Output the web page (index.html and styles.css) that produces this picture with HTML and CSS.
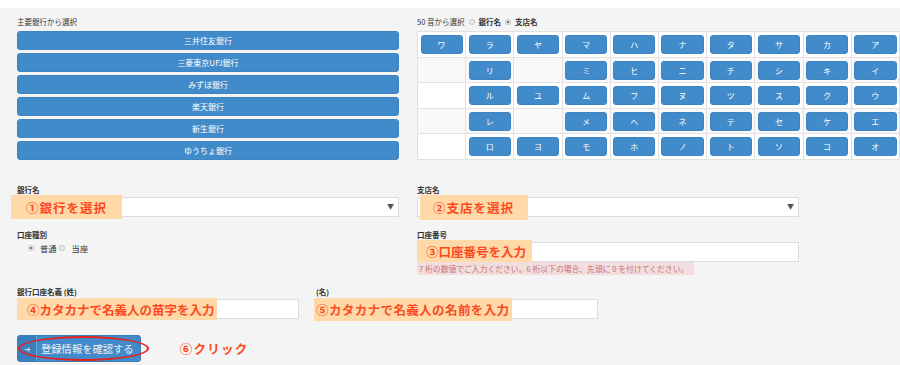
FILE: index.html
```html
<!DOCTYPE html>
<html lang="ja">
<head>
  <meta charset="UTF-8" />
  <meta name="viewport" content="width=device-width, initial-scale=1.0"/>
  <title>振込先口座の登録</title>
  <link rel="stylesheet" href="styles.css">
</head>
<body>
  <div class="topbar"></div>

  <div class="page">
    <!-- 銀行・支店の選択 -->
    <div class="select-row">
      <div class="col-left">
        <div class="caption">主要銀行から選択</div>
        <button class="bank-btn">三井住友銀行</button>
        <button class="bank-btn">三菱東京UFJ銀行</button>
        <button class="bank-btn">みずほ銀行</button>
        <button class="bank-btn">楽天銀行</button>
        <button class="bank-btn">新生銀行</button>
        <button class="bank-btn">ゆうちょ銀行</button>
      </div>

      <div class="col-right">
        <div class="caption">
          50 音から選択
          <span class="radio gap-l"></span>
          <b class="gap-l">銀行名</b>
          <span class="radio checked gap-l"></span>
          <b class="gap-l">支店名</b>
        </div>
        <table class="kana-table">
          <thead>
            <tr>
              <td><button class="kana-btn">ワ</button></td>
              <td><button class="kana-btn">ラ</button></td>
              <td><button class="kana-btn">ヤ</button></td>
              <td><button class="kana-btn">マ</button></td>
              <td><button class="kana-btn">ハ</button></td>
              <td><button class="kana-btn">ナ</button></td>
              <td><button class="kana-btn">タ</button></td>
              <td><button class="kana-btn">サ</button></td>
              <td><button class="kana-btn">カ</button></td>
              <td><button class="kana-btn">ア</button></td>
            </tr>
          </thead>
          <tbody>
            <tr>
              <td></td>
              <td><button class="kana-btn">リ</button></td>
              <td></td>
              <td><button class="kana-btn">ミ</button></td>
              <td><button class="kana-btn">ヒ</button></td>
              <td><button class="kana-btn">ニ</button></td>
              <td><button class="kana-btn">チ</button></td>
              <td><button class="kana-btn">シ</button></td>
              <td><button class="kana-btn">キ</button></td>
              <td><button class="kana-btn">イ</button></td>
            </tr>
            <tr>
              <td></td>
              <td><button class="kana-btn">ル</button></td>
              <td><button class="kana-btn">ユ</button></td>
              <td><button class="kana-btn">ム</button></td>
              <td><button class="kana-btn">フ</button></td>
              <td><button class="kana-btn">ヌ</button></td>
              <td><button class="kana-btn">ツ</button></td>
              <td><button class="kana-btn">ス</button></td>
              <td><button class="kana-btn">ク</button></td>
              <td><button class="kana-btn">ウ</button></td>
            </tr>
            <tr>
              <td></td>
              <td><button class="kana-btn">レ</button></td>
              <td></td>
              <td><button class="kana-btn">メ</button></td>
              <td><button class="kana-btn">ヘ</button></td>
              <td><button class="kana-btn">ネ</button></td>
              <td><button class="kana-btn">テ</button></td>
              <td><button class="kana-btn">セ</button></td>
              <td><button class="kana-btn">ケ</button></td>
              <td><button class="kana-btn">エ</button></td>
            </tr>
            <tr>
              <td></td>
              <td><button class="kana-btn">ロ</button></td>
              <td><button class="kana-btn">ヨ</button></td>
              <td><button class="kana-btn">モ</button></td>
              <td><button class="kana-btn">ホ</button></td>
              <td><button class="kana-btn">ノ</button></td>
              <td><button class="kana-btn">ト</button></td>
              <td><button class="kana-btn">ソ</button></td>
              <td><button class="kana-btn">コ</button></td>
              <td><button class="kana-btn">オ</button></td>
            </tr>
          </tbody>
        </table>
      </div>
    </div>

    <!-- 銀行名 / 支店名 -->
    <div class="form-row first">
      <div class="form-group">
        <div class="form-label">銀行名</div>
        <div class="field">
          <div class="select-box"></div>
          <div class="note note-bank">①銀行を選択</div>
        </div>
      </div>
      <div class="form-group">
        <div class="form-label">支店名</div>
        <div class="field">
          <div class="select-box"></div>
          <div class="note note-branch">②支店を選択</div>
        </div>
      </div>
    </div>

    <!-- 口座種別 / 口座番号 -->
    <div class="form-row">
      <div class="form-group">
        <div class="form-label">口座種別</div>
        <div class="radio-line">
          <span class="radio checked"></span>
          <span class="opt">普通</span>
          <span class="radio"></span>
          <span class="opt opt-2">当座</span>
        </div>
      </div>
      <div class="form-group">
        <div class="form-label">口座番号</div>
        <div class="field">
          <input class="text-input" type="text">
          <div class="note note-number">③口座番号を入力</div>
        </div>
        <div class="help">7 桁の数値でご入力ください。6 桁以下の場合、先頭に 0 を付けてください。</div>
      </div>
    </div>

    <!-- 名義 -->
    <div class="name-row">
      <div class="name-group">
        <div class="form-label">銀行口座名義 (姓)</div>
        <div class="field">
          <input class="text-input" type="text">
          <div class="note note-last">④カタカナで名義人の苗字を入力</div>
        </div>
      </div>
      <div class="name-group">
        <div class="form-label">(名)</div>
        <div class="field">
          <input class="text-input" type="text">
          <div class="note note-first">⑤カタカナで名義人の名前を入力</div>
        </div>
      </div>
    </div>

    <div class="submit-row">
      <button class="submit-btn">
        <span class="submit-icon">➜</span>
        <span class="submit-text">登録情報を確認する</span>
      </button>
      <div class="circle"></div>
      <span class="click-note">⑥クリック</span>
    </div>
  </div>
</body>
</html>
```

FILE: styles.css
```css
body {
  margin: 0;
  width: 900px;
  height: 365px;
  overflow: hidden;
  background-color: #f4f4f4;
  color: #333;
  font-family: "Noto Sans CJK JP", "Noto Sans", sans-serif;
}

.topbar {
  height: 8px;
  background-color: #fff;
}

.page {
  padding: 8px 0 0 17px;
}

.select-row {
  display: flex;
  gap: 18px;
}

.col-left {
  width: 382px;
}

.col-right {
  width: 483px;
}

.caption {
  display: flex;
  align-items: center;
  height: 12px;
  margin-bottom: 3px;
  font-size: 7.5px;
  line-height: 12px;
  white-space: nowrap;
}

.caption b {
  font-weight: bold;
}

.gap-l {
  margin-left: 4px;
}

.bank-btn, .kana-btn {
  display: block;
  width: 100%;
  height: 19px;
  padding: 0;
  border: 1px solid #3d84c3;
  border-radius: 3px;
  background-color: #428bca;
  color: #fff;
  font-family: "Noto Sans CJK JP", sans-serif;
  font-size: 8px;
  line-height: 17px;
}

.bank-btn {
  margin-bottom: 3px;
}

.kana-table {
  width: 483px;
  margin-top: 1px;
  border-collapse: collapse;
  table-layout: fixed;
  background-color: #fff;
}

.kana-table td {
  border: 1px solid #e1e1e1;
  padding: 3px 2.5px 2.5px;
}

.kana-table tbody tr:nth-child(odd) td {
  background-color: #f9f9f9;
}

.radio {
  display: inline-block;
  width: 6px;
  height: 6px;
  border: 1px solid #c4c4c4;
  border-radius: 50%;
  background-color: #ececec;
  box-sizing: border-box;
}

.radio.checked {
  background: radial-gradient(circle, #777 0 1.3px, #ececec 1.6px);
}

/* フォーム */
.form-row {
  display: flex;
  gap: 18px;
  margin-top: 12px;
}

.form-row.first {
  margin-top: 21px;
}

.form-group {
  width: 382px;
}

.form-label {
  font-size: 7.5px;
  font-weight: bold;
  line-height: 11px;
  margin-bottom: 2px;
  white-space: nowrap;
}

.field {
  position: relative;
}

.select-box {
  height: 20px;
  background-color: #fff;
  border: 1px solid #dcdcdc;
  box-sizing: border-box;
}

.select-box::after {
  content: "▼";
  position: absolute;
  right: 5px;
  top: 5px;
  font-size: 7px;
  line-height: 9px;
  color: #555;
}

.text-input {
  display: block;
  width: 100%;
  height: 20px;
  margin: 0;
  border: 1px solid #dcdcdc;
  background-color: #fff;
  box-sizing: border-box;
}

.radio-line {
  display: flex;
  align-items: center;
  height: 12px;
  padding-left: 11px;
  font-size: 8.3px;
}

.opt {
  margin: 0 2px 0 6px;
}

.opt-2 {
  margin-left: 7px;
}

.help {
  width: max-content;
  padding: 0 6px 0 2px;
  background-color: #f2dede;
  color: #c96f76;
  font-size: 7.8px;
  line-height: 13px;
  white-space: nowrap;
}

.name-row {
  display: flex;
  gap: 17px;
  margin-top: 11px;
}

.name-group {
  width: 282px;
}

/* 注釈 */
.note {
  position: absolute;
  display: flex;
  align-items: center;
  box-sizing: border-box;
  background-color: #ffd9a8;
  color: #fa4b1e;
  font-size: 12.5px;
  font-weight: bold;
  letter-spacing: 0.4px;
  white-space: nowrap;
}

.note-bank { left: -6px; top: -2px; width: 111px; height: 24px; padding-left: 15px; letter-spacing: 1px; }
.note-branch { left: 3px; top: -2px; width: 108px; height: 25px; padding-left: 13px; letter-spacing: 1px; }
.note-number { left: 0; top: -2px; width: 115px; height: 22px; padding-left: 9px; letter-spacing: 0; }
.note-last { left: 0; top: -1px; width: 200px; height: 22px; padding-left: 10px; letter-spacing: 0; }
.note-first { left: -2px; top: -1px; width: 198px; height: 23px; padding-left: 2px; }

.submit-row {
  position: relative;
  display: flex;
  align-items: center;
  margin-top: 16px;
}

.submit-btn {
  display: flex;
  height: 27px;
  padding: 0;
  border: 1px solid #3a7cb8;
  border-radius: 3px;
  background-color: #428bca;
  overflow: hidden;
  font-family: "Noto Sans CJK JP", sans-serif;
}

.submit-icon {
  width: 18px;
  background-color: #3b7ebd;
  border-right: 1px solid #6ea6d8;
  color: #d8d8d8;
  font-size: 8px;
  line-height: 25px;
  text-align: center;
}

.submit-text {
  padding: 0 6px 0 4px;
  color: #eef2f7;
  font-size: 10.3px;
  line-height: 25px;
}

.circle {
  position: absolute;
  left: 1px;
  top: 1px;
  width: 131px;
  height: 25px;
  border: 2px solid #e8201c;
  border-radius: 50%;
  box-sizing: border-box;
}

.click-note {
  margin-left: 39px;
  color: #fa4b1e;
  font-size: 12.5px;
  font-weight: bold;
  letter-spacing: 1.3px;
}
```
